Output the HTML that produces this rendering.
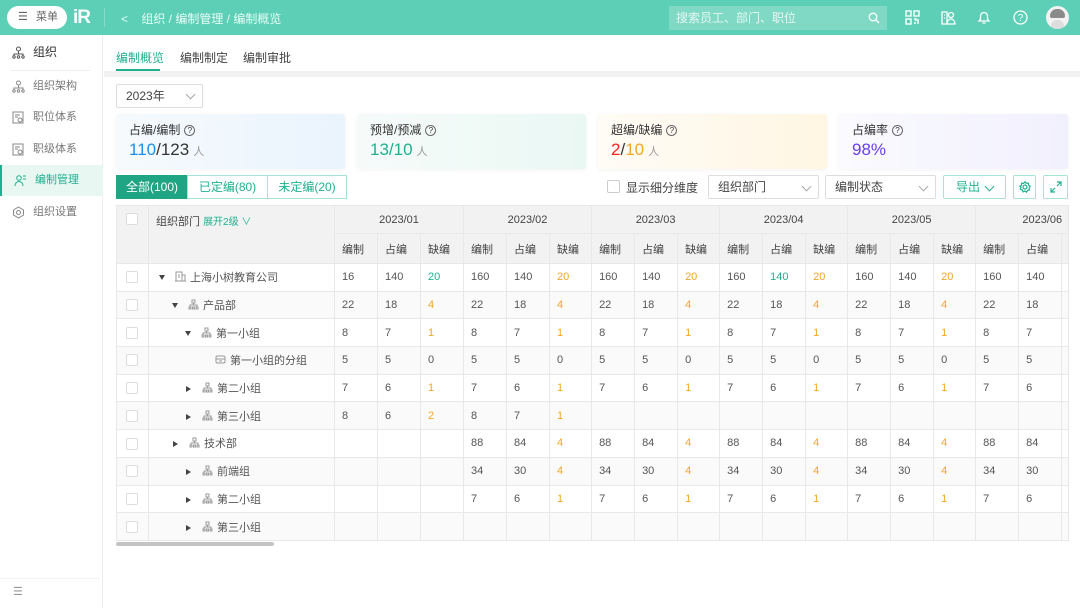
<!DOCTYPE html>
<html><head><meta charset="utf-8"><style>
*{box-sizing:border-box;margin:0;padding:0}
body{width:1080px;height:608px;overflow:hidden;background:#fff;font-family:"Liberation Sans","Noto Sans CJK SC",sans-serif;color:#333;font-size:12px;position:relative}
.top{position:absolute;left:0;top:0;width:1080px;height:35px;background:#5ccfb6}
.menu{position:absolute;left:7px;top:6px;width:60px;height:23px;background:#fff;border-radius:12px;color:#666;font-size:11px;line-height:23px;padding-left:29px}
.logo{position:absolute;left:73px;top:7px;color:#fff;font-weight:bold;font-size:19px;letter-spacing:-1px}
.crumb{position:absolute;left:121px;top:10px;color:#e8fbf6;font-size:12px}
.search{position:absolute;left:669px;top:6px;width:218px;height:24px;background:#7fd9c5;color:#e6f8f3;font-size:12px;line-height:24px;padding-left:7px}
.side{position:absolute;left:0;top:35px;width:103px;height:573px;background:#fff;border-right:1px solid #ececec}
.si{position:absolute;left:0;width:103px;height:31px;line-height:31px;padding-left:33px;color:#777;font-size:11px}
.si svg{position:absolute;left:12px;top:9px}
.tabs{position:absolute;left:104px;top:35px;width:976px;height:36px}
.tab{position:absolute;top:14px;font-size:12px;color:#444}
.strip{position:absolute;left:104px;top:71px;width:976px;height:6px;background:#f2f2f2}
.year{position:absolute;left:116px;top:84px;width:87px;height:24px;border:1px solid #ddd;border-radius:2px;padding-left:9px;line-height:22px;color:#444}
.card{position:absolute;top:114px;height:55px;border-radius:3px;box-shadow:0 1px 4px rgba(0,0,0,.05)}
.card .t{position:absolute;left:13px;top:7px;font-size:12px;color:#333}
.card .v{position:absolute;left:13px;top:26px;font-size:17px;color:#333}
.card .v small{font-size:11px;color:#999;margin-left:4px}
.q{display:inline-block;width:11px;height:11px;border:1px solid #666;border-radius:50%;font-size:8px;line-height:9px;text-align:center;margin-left:4px;vertical-align:1px}
.seg{position:absolute;top:175px;height:24px;border:1px solid #a6e3d4;line-height:22px;text-align:center;color:#20b08f;font-size:12px}
.ctl{position:absolute;top:175px;height:24px;border:1px solid #ddd;border-radius:2px;line-height:22px;padding-left:9px;color:#444;font-size:12px}
.chev{position:absolute;right:8px;top:7px;width:7px;height:7px;border-right:1px solid #aaa;border-bottom:1px solid #aaa;transform:rotate(45deg)}
table{position:absolute;left:116px;top:205px;border-collapse:collapse;table-layout:fixed;width:952px;font-size:11px;color:#555}
td{border:1px solid #e8e8e8;height:27.7px;padding-left:7px;white-space:nowrap;overflow:hidden}
tr.h td{background:#f2f2f2;color:#444}
tr.alt td{background:#fafafa}
.cb{display:inline-block;width:12px;height:12px;border:1px solid #ddd;background:#fff;border-radius:2px;vertical-align:middle}
.o{color:#f5a623}.g{color:#20b08f}
.tri{display:inline-block;width:0;height:0;border-left:3px solid transparent;border-right:3px solid transparent;border-top:5px solid #444;margin-right:10px;vertical-align:1px}
.trr{display:inline-block;width:0;height:0;border-top:3px solid transparent;border-bottom:3px solid transparent;border-left:5px solid #444;margin-right:11px;vertical-align:0}
.oi{display:inline-block;width:11px;height:11px;margin-right:4px;vertical-align:-1px}
.c{text-align:center;padding:0}
</style></head><body>
<div class="top">
 <div class="menu"><span style="position:absolute;left:11px;top:0;color:#666">☰</span>菜单</div>
 <div class="logo">iR</div>
 <div style="position:absolute;left:104px;top:8px;width:1px;height:19px;background:#8adcca"></div>
 <div class="crumb">&lt;&nbsp;&nbsp;&nbsp; 组织 / 编制管理 / 编制概览</div>
 <div class="search">搜索员工、部门、职位<svg style="position:absolute;right:7px;top:6px" width="12" height="12" viewBox="0 0 12 12"><circle cx="5" cy="5" r="3.8" fill="none" stroke="#fff" stroke-width="1.3"/><path d="M8 8l3 3" stroke="#fff" stroke-width="1.3"/></svg></div>
 <svg style="position:absolute;left:905px;top:10px" width="15" height="15" viewBox="0 0 15 15" fill="none" stroke="#fff" stroke-width="1.4"><rect x="1" y="1" width="5" height="5"/><rect x="9" y="1" width="5" height="5"/><rect x="1" y="9" width="5" height="5"/><path d="M9 9h2v2M13 9v5M9 13h2"/></svg>
 <svg style="position:absolute;left:941px;top:10px" width="15" height="15" viewBox="0 0 15 15" fill="none" stroke="#fff" stroke-width="1.3"><path d="M1 2h5v12H1zM3 5h1M3 8h1"/><circle cx="10" cy="5" r="2.5"/><path d="M6 14c0-3 2-5 4-5s4 2 4 5z"/></svg>
 <svg style="position:absolute;left:977px;top:9px" width="14" height="16" viewBox="0 0 14 16" fill="none" stroke="#fff" stroke-width="1.3"><path d="M2 12h10l-1.5-2V7a3.5 3.5 0 0 0-7 0v3z"/><path d="M5.5 14h3"/></svg>
 <svg style="position:absolute;left:1013px;top:10px" width="15" height="15" viewBox="0 0 15 15"><circle cx="7.5" cy="7.5" r="6.5" fill="none" stroke="#fff" stroke-width="1.3"/><text x="7.5" y="11" font-size="10" text-anchor="middle" fill="#fff" font-family="Liberation Sans">?</text></svg>
 <div style="position:absolute;left:1046px;top:6px;width:23px;height:23px;border-radius:50%;background:#f2f2f2;overflow:hidden"><div style="position:absolute;left:4px;top:3px;width:15px;height:9px;background:#8a8a8a;border-radius:7px 7px 2px 2px"></div><div style="position:absolute;left:5px;top:14px;width:13px;height:10px;background:#ddd;border-radius:6px 6px 0 0"></div></div>
</div>
<div class="side">
 <div class="si" style="top:2px;color:#333;font-size:12px"><svg width="13" height="13" viewBox="0 0 13 13" fill="none" stroke="#555"><circle cx="6.5" cy="3" r="2"/><path d="M6.5 5v3M2 10V8h9v2"/><circle cx="2" cy="11" r="1.2"/><circle cx="6.5" cy="11" r="1.2"/><circle cx="11" cy="11" r="1.2"/></svg>组织</div>
 <div style="position:absolute;left:11px;top:35px;width:79px;height:1px;background:#eee"></div>
 <div class="si" style="top:36px"><svg width="13" height="13" viewBox="0 0 13 13" fill="none" stroke="#888"><circle cx="6.5" cy="3" r="2"/><path d="M6.5 5v3M2 10V8h9v2"/><circle cx="2" cy="11" r="1.2"/><circle cx="6.5" cy="11" r="1.2"/><circle cx="11" cy="11" r="1.2"/></svg>组织架构</div>
 <div class="si" style="top:67px"><svg width="13" height="13" viewBox="0 0 13 13" fill="none" stroke="#888"><path d="M1 1h10v11H1z"/><path d="M3 4h5M3 6h3"/><circle cx="8" cy="9" r="2"/></svg>职位体系</div>
 <div class="si" style="top:99px"><svg width="13" height="13" viewBox="0 0 13 13" fill="none" stroke="#888"><path d="M1 1h10v11H1z"/><path d="M3 4h5M3 6h3"/><circle cx="8" cy="9" r="2"/></svg>职级体系</div>
 <div class="si" style="top:130px;background:#e9f7f3;color:#20b08f;border-left:2px solid #20b08f"><svg width="13" height="13" viewBox="0 0 13 13" fill="none" stroke="#20b08f"><circle cx="5" cy="4" r="2.3"/><path d="M1 12c0-3 2-4.5 4-4.5S9 9 9 12M9 2h3M9 5h3"/></svg>编制管理</div>
 <div class="si" style="top:162px"><svg width="13" height="13" viewBox="0 0 13 13" fill="none" stroke="#888"><path d="M6.5 1l5 3v5l-5 3-5-3V4z"/><circle cx="6.5" cy="6.5" r="2"/></svg>组织设置</div>
 <div style="position:absolute;left:0;top:543px;width:100px;height:1px;background:#f3f3f3"></div>
 <div style="position:absolute;left:13px;top:550px;color:#999;font-size:11px">☰</div>
</div>
<div class="tabs">
 <div class="tab" style="left:12px;color:#20b08f">编制概览</div>
 <div style="position:absolute;left:12px;top:34px;width:44px;height:2px;background:#20b08f"></div>
 <div class="tab" style="left:76px">编制制定</div>
 <div class="tab" style="left:139px">编制审批</div>
</div>
<div class="strip"></div>
<div class="year">2023年<span class="chev" style="top:6px"></span></div>
<div class="card" style="left:116px;width:229px;background:linear-gradient(90deg,#f6fafd,#eaf4fd)"><div class="t">占编/编制<span class="q">?</span></div><div class="v"><span style="color:#1f8fef">110</span>/123<small>人</small></div></div>
<div class="card" style="left:357px;width:229px;background:linear-gradient(90deg,#f6fbfa,#eaf8f4)"><div class="t">预增/预减<span class="q">?</span></div><div class="v"><span class="g">13/10</span><small>人</small></div></div>
<div class="card" style="left:598px;width:229px;background:linear-gradient(90deg,#fffcf6,#fff6e3)"><div class="t">超编/缺编<span class="q">?</span></div><div class="v"><span style="color:#f22">2</span>/<span class="o">10</span><small>人</small></div></div>
<div class="card" style="left:839px;width:229px;background:linear-gradient(90deg,#fafaff,#f1f0fd)"><div class="t">占编率<span class="q">?</span></div><div class="v" style="color:#6a3ef0">98%</div></div>
<div class="seg" style="left:116px;width:72px;background:#20a584;border-color:#20a584;color:#fff">全部(100)</div>
<div class="seg" style="left:187px;width:81px">已定编(80)</div>
<div class="seg" style="left:267px;width:80px">未定编(20)</div>
<div style="position:absolute;left:607px;top:180px;width:13px;height:13px;border:1px solid #ccc;border-radius:2px"></div>
<div style="position:absolute;left:626px;top:179px;color:#444">显示细分维度</div>
<div class="ctl" style="left:708px;width:111px">组织部门<span class="chev"></span></div>
<div class="ctl" style="left:825px;width:111px">编制状态<span class="chev"></span></div>
<div class="ctl" style="left:943px;width:63px;border-color:#a6e3d4;color:#20b08f;padding-left:12px">导出<span class="chev" style="border-color:#20b08f;right:12px"></span></div>
<div class="ctl" style="left:1013px;width:23px;border-color:#a6e3d4;padding:0"><svg style="position:absolute;left:5px;top:5px" width="12" height="12" viewBox="0 0 12 12" fill="none" stroke="#20b08f" stroke-width="1.2"><circle cx="6" cy="6" r="2"/><path d="M6 .8l1.3 1.5 2 -.2.3 2 1.6 1.2-1.1 1.7.4 2-2 .4-1 1.8-1.5-1.2-1.8.9-.8-1.9-2-.6.6-2L.8 5.3l1.7-1 .1-2 2 .1z"/></svg></div>
<div class="ctl" style="left:1043px;width:25px;border-color:#a6e3d4;padding:0"><svg style="position:absolute;left:6px;top:5px" width="12" height="12" viewBox="0 0 12 12" fill="none" stroke="#20b08f" stroke-width="1.2"><path d="M7 1h4v4M11 1L7 5M5 11H1V7M1 11l4-4"/></svg></div>

<table>
<colgroup><col style="width:32px"><col style="width:186px">
<col style="width:43px"><col style="width:43px"><col style="width:43px">
<col style="width:43px"><col style="width:43px"><col style="width:42px">
<col style="width:43px"><col style="width:43px"><col style="width:42px">
<col style="width:43px"><col style="width:43px"><col style="width:42px">
<col style="width:43px"><col style="width:43px"><col style="width:42px">
<col style="width:43px"><col style="width:43px"><col style="width:7px"></colgroup>
<tr class="h" style="height:28px"><td rowspan="2" style="vertical-align:top;padding-top:7px;padding-left:9px"><span class="cb"></span></td><td rowspan="2" style="vertical-align:top;padding-top:7px">组织部门 <span class="g" style="font-size:10px">展开2级 ∨</span></td>
<td colspan="3" class="c">2023/01</td><td colspan="3" class="c">2023/02</td><td colspan="3" class="c">2023/03</td><td colspan="3" class="c">2023/04</td><td colspan="3" class="c">2023/05</td><td colspan="3" style="text-align:right;padding-right:6px">2023/06</td></tr>
<tr class="h" style="height:30px"><td>编制</td><td>占编</td><td>缺编</td><td>编制</td><td>占编</td><td>缺编</td><td>编制</td><td>占编</td><td>缺编</td><td>编制</td><td>占编</td><td>缺编</td><td>编制</td><td>占编</td><td>缺编</td><td>编制</td><td>占编</td><td></td></tr>
<tr><td style="padding-left:9px"><span class="cb"></span></td><td style="padding-left:10px"><span class="tri"></span><svg class="oi" viewBox="0 0 11 11" fill="none" stroke="#999"><path d="M1 10V1h6v9M7 4h3v6M0 10h11M3 4h2M3 6h2"/></svg>上海小树教育公司</td><td>16</td><td>140</td><td class="g">20</td><td>160</td><td>140</td><td class="o">20</td><td>160</td><td>140</td><td class="o">20</td><td>160</td><td class="g">140</td><td class="o">20</td><td>160</td><td>140</td><td class="o">20</td><td>160</td><td>140</td><td></td></tr>
<tr class="alt"><td style="padding-left:9px"><span class="cb"></span></td><td style="padding-left:23px"><span class="tri"></span><svg class="oi" viewBox="0 0 11 11" fill="none" stroke="#999"><rect x="4" y="1" width="3" height="3"/><path d="M5.5 4v2M2 8V6h7v2"/><rect x="1" y="8" width="2" height="2"/><rect x="4.5" y="8" width="2" height="2"/><rect x="8" y="8" width="2" height="2"/></svg>产品部</td><td>22</td><td>18</td><td class="o">4</td><td>22</td><td>18</td><td class="o">4</td><td>22</td><td>18</td><td class="o">4</td><td>22</td><td>18</td><td class="o">4</td><td>22</td><td>18</td><td class="o">4</td><td>22</td><td>18</td><td></td></tr>
<tr><td style="padding-left:9px"><span class="cb"></span></td><td style="padding-left:36px"><span class="tri"></span><svg class="oi" viewBox="0 0 11 11" fill="none" stroke="#999"><rect x="4" y="1" width="3" height="3"/><path d="M5.5 4v2M2 8V6h7v2"/><rect x="1" y="8" width="2" height="2"/><rect x="4.5" y="8" width="2" height="2"/><rect x="8" y="8" width="2" height="2"/></svg>第一小组</td><td>8</td><td>7</td><td class="o">1</td><td>8</td><td>7</td><td class="o">1</td><td>8</td><td>7</td><td class="o">1</td><td>8</td><td>7</td><td class="o">1</td><td>8</td><td>7</td><td class="o">1</td><td>8</td><td>7</td><td></td></tr>
<tr class="alt"><td style="padding-left:9px"><span class="cb"></span></td><td style="padding-left:66px"><svg class="oi" viewBox="0 0 11 11" fill="none" stroke="#999"><rect x="1" y="2" width="9" height="7" rx="1.5"/><path d="M1 5h9M4 7h3"/></svg>第一小组的分组</td><td>5</td><td>5</td><td>0</td><td>5</td><td>5</td><td>0</td><td>5</td><td>5</td><td>0</td><td>5</td><td>5</td><td>0</td><td>5</td><td>5</td><td>0</td><td>5</td><td>5</td><td></td></tr>
<tr><td style="padding-left:9px"><span class="cb"></span></td><td style="padding-left:37px"><span class="trr"></span><svg class="oi" viewBox="0 0 11 11" fill="none" stroke="#999"><rect x="4" y="1" width="3" height="3"/><path d="M5.5 4v2M2 8V6h7v2"/><rect x="1" y="8" width="2" height="2"/><rect x="4.5" y="8" width="2" height="2"/><rect x="8" y="8" width="2" height="2"/></svg>第二小组</td><td>7</td><td>6</td><td class="o">1</td><td>7</td><td>6</td><td class="o">1</td><td>7</td><td>6</td><td class="o">1</td><td>7</td><td>6</td><td class="o">1</td><td>7</td><td>6</td><td class="o">1</td><td>7</td><td>6</td><td></td></tr>
<tr class="alt"><td style="padding-left:9px"><span class="cb"></span></td><td style="padding-left:37px"><span class="trr"></span><svg class="oi" viewBox="0 0 11 11" fill="none" stroke="#999"><rect x="4" y="1" width="3" height="3"/><path d="M5.5 4v2M2 8V6h7v2"/><rect x="1" y="8" width="2" height="2"/><rect x="4.5" y="8" width="2" height="2"/><rect x="8" y="8" width="2" height="2"/></svg>第三小组</td><td>8</td><td>6</td><td class="o">2</td><td>8</td><td>7</td><td class="o">1</td><td></td><td></td><td></td><td></td><td></td><td></td><td></td><td></td><td></td><td></td><td></td><td></td></tr>
<tr><td style="padding-left:9px"><span class="cb"></span></td><td style="padding-left:24px"><span class="trr"></span><svg class="oi" viewBox="0 0 11 11" fill="none" stroke="#999"><rect x="4" y="1" width="3" height="3"/><path d="M5.5 4v2M2 8V6h7v2"/><rect x="1" y="8" width="2" height="2"/><rect x="4.5" y="8" width="2" height="2"/><rect x="8" y="8" width="2" height="2"/></svg>技术部</td><td></td><td></td><td></td><td>88</td><td>84</td><td class="o">4</td><td>88</td><td>84</td><td class="o">4</td><td>88</td><td>84</td><td class="o">4</td><td>88</td><td>84</td><td class="o">4</td><td>88</td><td>84</td><td></td></tr>
<tr class="alt"><td style="padding-left:9px"><span class="cb"></span></td><td style="padding-left:37px"><span class="trr"></span><svg class="oi" viewBox="0 0 11 11" fill="none" stroke="#999"><rect x="4" y="1" width="3" height="3"/><path d="M5.5 4v2M2 8V6h7v2"/><rect x="1" y="8" width="2" height="2"/><rect x="4.5" y="8" width="2" height="2"/><rect x="8" y="8" width="2" height="2"/></svg>前端组</td><td></td><td></td><td></td><td>34</td><td>30</td><td class="o">4</td><td>34</td><td>30</td><td class="o">4</td><td>34</td><td>30</td><td class="o">4</td><td>34</td><td>30</td><td class="o">4</td><td>34</td><td>30</td><td></td></tr>
<tr><td style="padding-left:9px"><span class="cb"></span></td><td style="padding-left:37px"><span class="trr"></span><svg class="oi" viewBox="0 0 11 11" fill="none" stroke="#999"><rect x="4" y="1" width="3" height="3"/><path d="M5.5 4v2M2 8V6h7v2"/><rect x="1" y="8" width="2" height="2"/><rect x="4.5" y="8" width="2" height="2"/><rect x="8" y="8" width="2" height="2"/></svg>第二小组</td><td></td><td></td><td></td><td>7</td><td>6</td><td class="o">1</td><td>7</td><td>6</td><td class="o">1</td><td>7</td><td>6</td><td class="o">1</td><td>7</td><td>6</td><td class="o">1</td><td>7</td><td>6</td><td></td></tr>
<tr class="alt"><td style="padding-left:9px"><span class="cb"></span></td><td style="padding-left:37px"><span class="trr"></span><svg class="oi" viewBox="0 0 11 11" fill="none" stroke="#999"><rect x="4" y="1" width="3" height="3"/><path d="M5.5 4v2M2 8V6h7v2"/><rect x="1" y="8" width="2" height="2"/><rect x="4.5" y="8" width="2" height="2"/><rect x="8" y="8" width="2" height="2"/></svg>第三小组</td><td></td><td></td><td></td><td></td><td></td><td></td><td></td><td></td><td></td><td></td><td></td><td></td><td></td><td></td><td></td><td></td><td></td><td></td></tr>
</table>
<div style="position:absolute;left:116px;top:542px;width:158px;height:4px;border-radius:2px;background:#c4c4c4"></div>
</body></html>
